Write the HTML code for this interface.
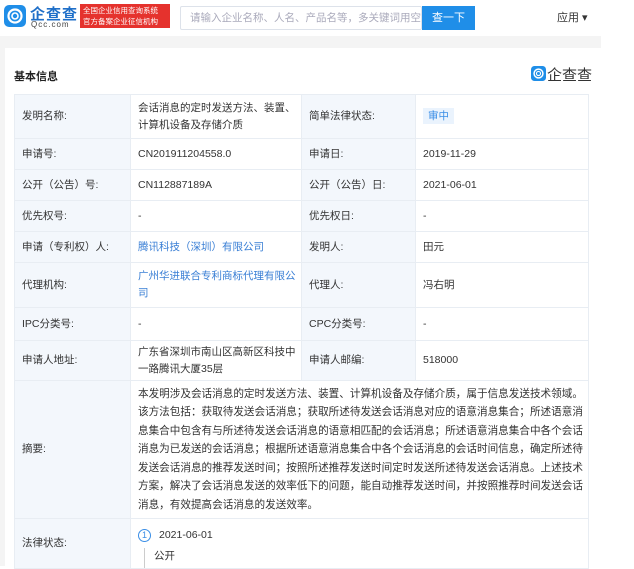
<!DOCTYPE html>
<html><head><meta charset="utf-8"><style>
*{margin:0;padding:0;box-sizing:border-box}
body{width:634px;height:566px;overflow:hidden;background:#fff;font-family:"Liberation Sans","Noto Sans CJK SC",sans-serif;font-size:10.5px;color:#333;position:relative}
.hdr{position:absolute;left:0;top:0;width:601px;height:36px;background:#fff}
.gray{position:absolute;left:0;top:36px;width:601px;height:530px;background:#f4f4f4}
.panel{position:absolute;left:5px;top:48px;width:596px;height:518px;background:#fff}
table{position:absolute;left:14px;top:94px;border-collapse:collapse;width:575px;table-layout:fixed}
td{border:1px solid #e8edf3;padding:0 7px;vertical-align:middle;line-height:17px}
td.l{background:#f3f7fc;color:#333}
a{color:#3a7fd5;text-decoration:none}
</style></head><body>
<div class="hdr">
 <svg style="position:absolute;left:4px;top:5px" width="22" height="22" viewBox="0 0 22 22"><rect width="22" height="22" rx="5" fill="#1f8ee8"/><circle cx="11" cy="11" r="6.5" fill="none" stroke="#fff" stroke-width="2.2"/><circle cx="11" cy="11" r="3" fill="none" stroke="#fff" stroke-width="1.6"/></svg>
 <div style="position:absolute;left:30px;top:3px;font-size:15px;color:#1f6fc8;letter-spacing:1px;font-weight:bold">企查查</div>
 <div style="position:absolute;left:31px;top:20px;font-size:8px;color:#444;letter-spacing:1px">Qcc.com</div>
 <div style="position:absolute;left:80px;top:4px;width:90px;height:24px;background:#e5322d;color:#fff;font-size:7.5px;line-height:11px;padding:1px 3px">全国企业信用查询系统<br>官方备案企业征信机构</div>
 <div style="position:absolute;left:180px;top:6px;width:242px;height:24px;border:1px solid #dde2ea;border-radius:2px;color:#aab;font-size:10.5px;line-height:22px;padding-left:9px;white-space:nowrap;overflow:hidden">请输入企业名称、人名、产品名等，多关键词用空</div>
 <div style="position:absolute;left:422px;top:6px;width:53px;height:24px;background:#1f8ee8;color:#fff;font-size:11px;line-height:24px;text-align:center">查一下</div>
 <div style="position:absolute;left:557px;top:9px;font-size:11px;color:#333">应用 ▾</div>
</div>
<div class="gray"></div>
<div class="panel"></div>
<div style="position:absolute;left:14px;top:68px;font-size:11px;color:#222;font-weight:bold">基本信息</div>
<svg style="position:absolute;left:531px;top:66px" width="15" height="15" viewBox="0 0 22 22"><rect width="22" height="22" rx="5" fill="#1f8ee8"/><circle cx="11" cy="11" r="6.5" fill="none" stroke="#fff" stroke-width="2.2"/><circle cx="11" cy="11" r="3" fill="none" stroke="#fff" stroke-width="1.6"/></svg>
<div style="position:absolute;left:547px;top:64px;font-size:15px;color:#333">企查查</div>
<table>
<colgroup><col style="width:116px"><col style="width:171px"><col style="width:114px"><col></colgroup>
<tr style="height:44px"><td class="l">发明名称:</td><td style="padding-right:2px">会话消息的定时发送方法、装置、计算机设备及存储介质</td><td class="l">简单法律状态:</td><td><span style="background:#eaf3fd;color:#3a8ee6;padding:2px 5px">审中</span></td></tr>
<tr style="height:31px"><td class="l">申请号:</td><td>CN201911204558.0</td><td class="l">申请日:</td><td>2019-11-29</td></tr>
<tr style="height:31px"><td class="l">公开（公告）号:</td><td>CN112887189A</td><td class="l">公开（公告）日:</td><td>2021-06-01</td></tr>
<tr style="height:31px"><td class="l">优先权号:</td><td>-</td><td class="l">优先权日:</td><td>-</td></tr>
<tr style="height:31px"><td class="l">申请（专利权）人:</td><td><a>腾讯科技（深圳）有限公司</a></td><td class="l">发明人:</td><td>田元</td></tr>
<tr style="height:45px"><td class="l">代理机构:</td><td style="padding-right:2px"><a>广州华进联合专利商标代理有限公司</a></td><td class="l">代理人:</td><td>冯右明</td></tr>
<tr style="height:33px"><td class="l">IPC分类号:</td><td>-</td><td class="l">CPC分类号:</td><td>-</td></tr>
<tr style="height:40px"><td class="l">申请人地址:</td><td style="padding-right:2px">广东省深圳市南山区高新区科技中一路腾讯大厦35层</td><td class="l">申请人邮编:</td><td>518000</td></tr>
<tr style="height:138px"><td class="l">摘要:</td><td colspan="3" style="line-height:18.5px;padding-right:4px;font-size:10.6px">本发明涉及会话消息的定时发送方法、装置、计算机设备及存储介质，属于信息发送技术领域。该方法包括：获取待发送会话消息；获取所述待发送会话消息对应的语意消息集合；所述语意消息集合中包含有与所述待发送会话消息的语意相匹配的会话消息；所述语意消息集合中各个会话消息为已发送的会话消息；根据所述语意消息集合中各个会话消息的会话时间信息，确定所述待发送会话消息的推荐发送时间；按照所述推荐发送时间定时发送所述待发送会话消息。上述技术方案，解决了会话消息发送的效率低下的问题，能自动推荐发送时间，并按照推荐时间发送会话消息，有效提高会话消息的发送效率。</td></tr>
<tr style="height:50px"><td class="l">法律状态:</td><td colspan="3" style="position:relative;vertical-align:top;padding-top:8px"><span style="display:inline-block;width:13px;height:13px;border:1px solid #3a8ee6;border-radius:50%;color:#3a8ee6;font-size:9px;line-height:11px;text-align:center;margin-right:8px">1</span>2021-06-01<div style="margin:4px 0 0 6px;border-left:1px solid #ccc;padding-left:9px;height:20px">公开</div></td></tr>
</table>
</body></html>
